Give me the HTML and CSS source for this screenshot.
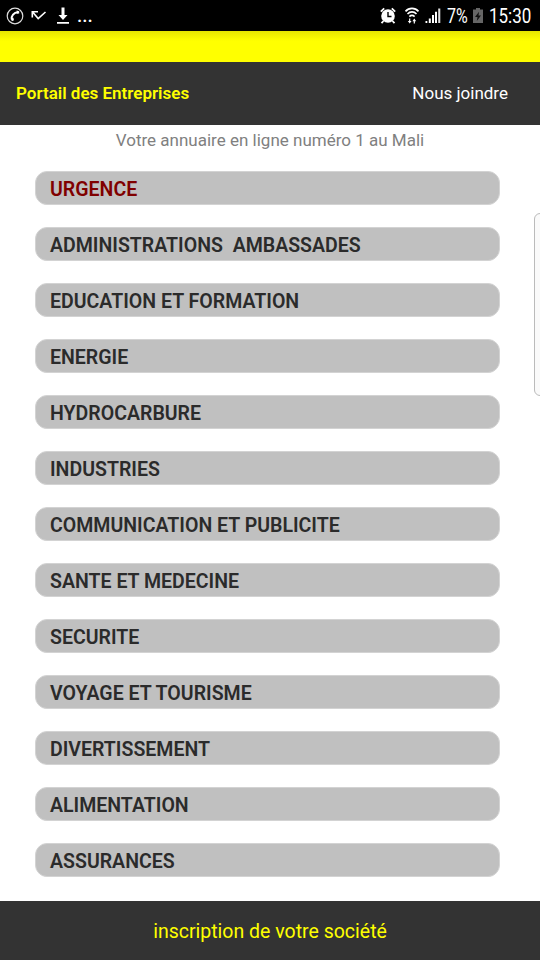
FILE: index.html
```
<!DOCTYPE html>
<html lang="fr">
<head>
    <meta charset="UTF-8">
    <meta name="viewport" content="width=device-width, initial-scale=1.0">
    <title>Portail des Entreprises</title>
    <link rel="stylesheet" href="styles.css">
</head>
<body>

    <div class="status-bar">
        <div class="status-left">
            <svg class="icon-call" width="18" height="18" viewBox="0 0 18 18">
                <circle cx="9" cy="9" r="7.8" fill="none" stroke="#ddd" stroke-width="1.2"/>
                <path d="M5.8 12.6 C4.8 9 8 5.4 11.8 5.2" fill="none" stroke="#fff" stroke-width="2"/>
                <path d="M10.6 3.6 L13.2 4.2 L13.2 6.4 L10.8 6.8 Z M4.8 11 L7.4 10.8 L8 13.2 L5.8 14.2 Z" fill="#fff"/>
            </svg>
            <svg class="icon-missed" width="16" height="12" viewBox="0 0 16 12">
                <path d="M1.3 7.4 V1.7 H7 M1.6 2 L7.2 8.6 L14.5 2" fill="none" stroke="#fff" stroke-width="1.6"/>
            </svg>
            <svg class="icon-download" width="14" height="18" viewBox="0 0 14 18">
                <path d="M5.5 0.5 H8.5 V8 H11.5 L7 13 L2.5 8 H5.5 Z M1 15 H13 V16.8 H1 Z" fill="#fff"/>
            </svg>
            <span class="dots">...</span>
        </div>
        <div class="status-right">
            <svg class="icon-alarm" width="16" height="18" viewBox="0 0 16 18">
                <path d="M0.8 4.6 L4.2 1.4 M15.2 4.6 L11.8 1.4 M3.5 14 L1.5 16.2 M12.5 14 L14.5 16.2" stroke="#fff" stroke-width="1.8"/>
                <circle cx="8" cy="9" r="6.8" fill="#fff"/>
                <path d="M8 5 V9.5 H11.5" fill="none" stroke="#000" stroke-width="1.4"/>
            </svg>
            <svg class="icon-wifi" width="16" height="18" viewBox="0 0 16 18">
                <path d="M1.5 4.4 C5 0.4 11 0.4 14.5 4.4 M3.5 7 C6 4.2 10 4.2 12.5 7 M5.4 9.6 C7 8 9 8 10.6 9.6" fill="none" stroke="#fff" stroke-width="1.6"/>
                <path d="M5.1 11.5 H6.3 V14 H7.6 L5.7 16.6 L3.8 14 H5.1 Z M9.7 16.6 V14.2 H8.4 L10.3 11.5 L12.2 14.2 H10.9 V16.6 Z" fill="#fff"/>
            </svg>
            <svg class="icon-signal" width="16" height="17" viewBox="0 0 16 17">
                <path d="M0.5 14 H2.3 V16 H0.5 Z M3.8 11.5 H5.8 V16 H3.8 Z M7 8 H9 V16 H7 Z M10 4.8 H12 V16 H10 Z" fill="#fff"/>
                <path d="M13.2 1.5 H15.3 V16 H13.2 Z" fill="#ddd"/>
            </svg>
            <span class="battery-level">7%</span>
            <svg class="icon-battery" width="10" height="16" viewBox="0 0 10 16">
                <path d="M3 0 H7 V1.6 H10 V15 H0 V1.6 H3 Z" fill="#666"/>
                <path d="M6 3.8 L2 9 H4.5 L3.8 13 L8 7.6 H5.5 Z" fill="#111"/>
            </svg>
            <span class="clock">15:30</span>
        </div>
    </div>

    <div class="yellow-band"></div>

    <nav class="navbar">
        <span class="brand">Portail des Entreprises</span>
        <span class="contact">Nous joindre</span>
    </nav>

    <main>
        <p class="slogan">Votre annuaire en ligne numéro 1 au Mali</p>

        <ul class="categories">
            <li class="urgent">URGENCE</li>
            <li>ADMINISTRATIONS&nbsp; AMBASSADES</li>
            <li>EDUCATION ET FORMATION</li>
            <li>ENERGIE</li>
            <li>HYDROCARBURE</li>
            <li>INDUSTRIES</li>
            <li>COMMUNICATION ET PUBLICITE</li>
            <li>SANTE ET MEDECINE</li>
            <li>SECURITE</li>
            <li>VOYAGE ET TOURISME</li>
            <li>DIVERTISSEMENT</li>
            <li>ALIMENTATION</li>
            <li>ASSURANCES</li>
        </ul>
    </main>

    <footer>inscription de votre société</footer>

    <!-- Edge panel handle -->
    <div class="edge-handle"></div>

</body>
</html>
```
FILE: styles.css
```
* {
    box-sizing: border-box;
}

body {
    margin: 0;
    height: 960px;
    display: flex;
    flex-direction: column;
    position: relative;
    overflow: hidden;
    font-family: Roboto, sans-serif;
    background-color: #fff;
}

/* Status bar */
.status-bar {
    height: 31px;
    display: flex;
    justify-content: space-between;
    align-items: center;
    padding: 0 8px 0 6px;
    background-color: #000;
    color: #fff;
    font-size: 20px;
}

.status-left,
.status-right {
    display: flex;
    align-items: center;
}

.icon-missed {
    margin-left: 7px;
}

.icon-download {
    margin-left: 9px;
}

.dots {
    margin-left: 7px;
    font-size: 19px;
    font-weight: 500;
}

.icon-wifi {
    margin-left: 8px;
}

.icon-signal {
    margin-left: 5px;
}

.battery-level {
    width: 22px;
    margin-left: 6px;
    transform: scaleX(0.8);
    transform-origin: left;
}

.icon-battery {
    margin-left: 4px;
}

.clock {
    width: 43px;
    margin-left: 6px;
    transform: scaleX(0.85);
    transform-origin: left;
}

.yellow-band {
    height: 31px;
    background: linear-gradient(#e6e600, #ff0 10px);
}

/* Header */
.navbar {
    height: 63px;
    display: flex;
    justify-content: space-between;
    align-items: center;
    padding: 0 32px 1px 16px;
    background-color: #333;
    font-size: 17px;
}

.brand {
    color: #ff0;
    font-weight: 600;
}

.contact {
    color: #fff;
}

/* Categories */
main {
    flex: 1;
}

.slogan {
    margin: 5px 0 0;
    font-size: 17px;
    line-height: 20px;
    text-align: center;
    color: #808080;
}

.categories {
    display: flex;
    flex-direction: column;
    gap: 22px;
    margin: 21px 40px 0 35px;
    padding: 0;
    list-style: none;
}

.categories li {
    height: 34px;
    padding-left: 14px;
    border: 1px solid #d3d3d3;
    border-radius: 12px;
    background-color: #c0c0c0;
    color: #2b2b2b;
    font-size: 19.55px;
    font-weight: 600;
    line-height: 35px;
}

.categories .urgent {
    color: #800000;
}

footer {
    height: 59px;
    background-color: #333;
    color: #ff0;
    font-size: 19.5px;
    line-height: 62px;
    text-align: center;
}

.edge-handle {
    position: absolute;
    top: 213px;
    right: -6px;
    width: 12px;
    height: 183px;
    border: 1px solid #bbb;
    border-radius: 8px;
    background-color: #fafafa;
}
```
